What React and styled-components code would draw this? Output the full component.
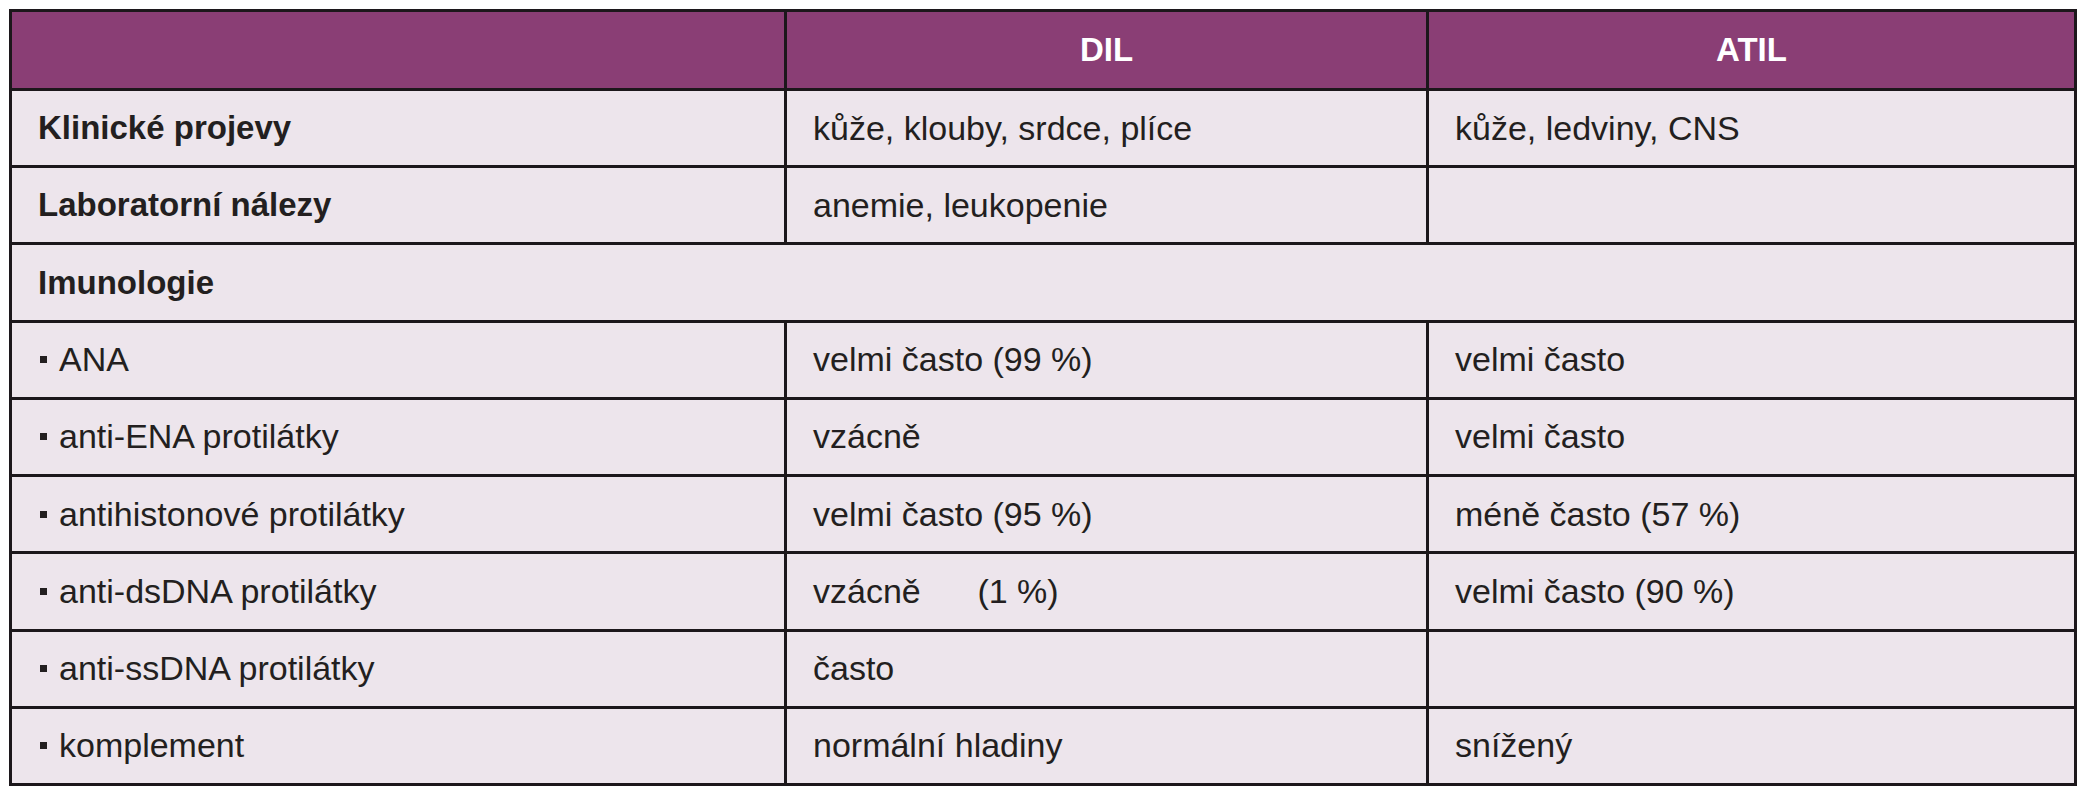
import React from "react";
import styled, { createGlobalStyle } from "styled-components";

const GlobalStyle = createGlobalStyle`
  html, body {
    margin: 0;
    padding: 0;
    background: #ffffff;
  }
  body {
    font-family: "Liberation Sans", Arial, sans-serif;
  }
`;

const Page = styled.div`
  padding: 9px 13px 14px 9px;
`;

const Table = styled.div`
  box-sizing: border-box;
  display: grid;
  grid-template-columns: 772px 639px 645px;
  grid-template-rows: 76px repeat(9, 1fr);
  gap: 3px;
  width: 2068px;
  height: 777px;
  border: 3px solid #1c171b;
  background: #1c171b;
`;

const HeadCell = styled.div`
  display: flex;
  align-items: center;
  justify-content: center;
  background: #8a3e75;
  color: #ffffff;
  font-size: 33px;
  font-weight: 700;
`;

const Cell = styled.div`
  display: flex;
  align-items: center;
  padding-left: ${(p) => (p.$indent ? "28px" : "26px")};
  background: #ede5ec;
  color: #231f20;
  font-size: ${(p) => (p.$bold ? "33px" : "34px")};
  font-weight: ${(p) => (p.$bold ? 700 : 400)};
  white-space: pre;
  grid-column: ${(p) => (p.$span ? "1 / -1" : "auto")};
`;

const Bullet = styled.span`
  display: inline-block;
  width: 7px;
  height: 7px;
  margin-right: 12px;
  background: #231f20;
`;

const rows = [
  { label: "Klinické projevy", bold: true, dil: "kůže, klouby, srdce, plíce", atil: "kůže, ledviny, CNS" },
  { label: "Laboratorní nálezy", bold: true, dil: "anemie, leukopenie", atil: "" },
  { label: "Imunologie", bold: true, span: true },
  { label: "ANA", bullet: true, dil: "velmi často (99 %)", atil: "velmi často" },
  { label: "anti-ENA protilátky", bullet: true, dil: "vzácně", atil: "velmi často" },
  { label: "antihistonové protilátky", bullet: true, dil: "velmi často (95 %)", atil: "méně často (57 %)" },
  { label: "anti-dsDNA protilátky", bullet: true, dil: "vzácně\u00a0\u00a0\u00a0\u00a0\u00a0\u00a0(1 %)", atil: "velmi často (90 %)" },
  { label: "anti-ssDNA protilátky", bullet: true, dil: "často", atil: "" },
  { label: "komplement", bullet: true, dil: "normální hladiny", atil: "snížený" },
];

export default function App() {
  return (
    <Page>
      <GlobalStyle />
      <Table>
        <HeadCell />
        <HeadCell>DIL</HeadCell>
        <HeadCell>ATIL</HeadCell>
        {rows.map((r) =>
          r.span ? (
            <Cell key={r.label} $bold $span>
              {r.label}
            </Cell>
          ) : (
            <React.Fragment key={r.label}>
              <Cell $bold={r.bold} $indent={r.bullet}>
                {r.bullet && <Bullet />}
                {r.label}
              </Cell>
              <Cell>{r.dil}</Cell>
              <Cell>{r.atil}</Cell>
            </React.Fragment>
          )
        )}
      </Table>
    </Page>
  );
}
